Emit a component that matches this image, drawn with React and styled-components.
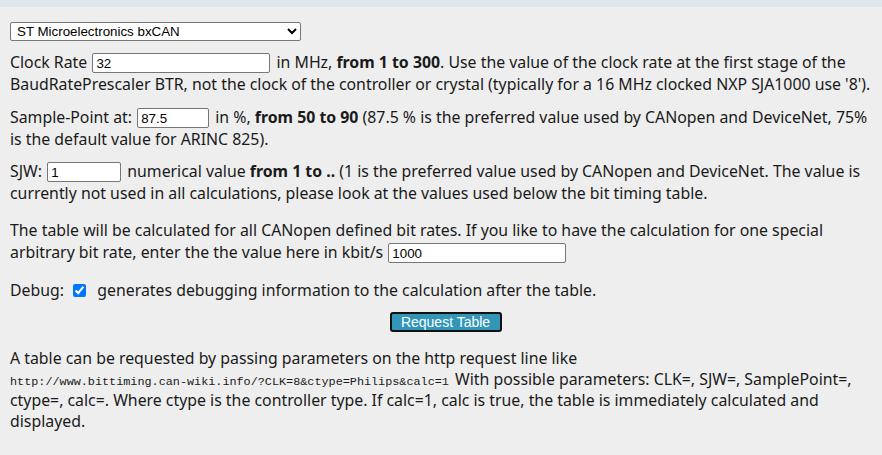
import React from 'react'
import styled, { createGlobalStyle } from 'styled-components'

const Global = createGlobalStyle`
    body {
        margin: 0;
        background: #eeeeee;
        font-family: "Noto Sans", "Open Sans", sans-serif;
        font-size: 15.85px;
        color: #1a1a1a;
    }
`

const TopStrip = styled.div`
    height: 7px;
    background: #dde7f0;
`

const Content = styled.div`
    padding: 15px 10px 0 10px;
    width: 864px;
`

const Select = styled.select`
    display: block;
    width: 291px;
    height: 19px;
    font-family: "Liberation Sans", Arial, sans-serif;
    font-size: 13.33px;
    color: #000;
    background: #fff;
    border: 1px solid #767676;
    border-radius: 2px;
    padding: 0 0 0 2px;
    margin: 0 0 10px 0;
`

const Para = styled.p`
    margin: 0 0 ${(p) => p.$gap || 11}px 0;
    line-height: ${(p) => p.$lh || 22}px;
`

const Field = styled.input`
    width: ${(p) => p.$w}px;
    height: 20px;
    box-sizing: border-box;
    font-family: "Liberation Sans", Arial, sans-serif;
    font-size: 13.33px;
    line-height: 16px;
    color: #000;
    background: #fff;
    border: 1px solid #767676;
    border-radius: 2px;
    padding: 1px 3px;
    margin: 2px 2px 0 1px;
    vertical-align: top;
`

const Check = styled.input`
    width: 13px;
    height: 13px;
    margin: 0 7px 0 5px;
    accent-color: #0075ff;
    vertical-align: -1px;
`

const ButtonRow = styled.div`
    display: flex;
    justify-content: center;
    padding-left: 7px;
    margin: 0 0 16px 0;
`

const Button = styled.button`
    width: 112px;
    height: 20px;
    background: #3196b8;
    color: #fff;
    font-family: "Liberation Sans", Arial, sans-serif;
    font-size: 14px;
    border: 2px solid #111;
    border-radius: 3px;
    padding: 0;
    line-height: 16px;
`

const Mono = styled.code`
    font-family: "Liberation Mono", "DejaVu Sans Mono", monospace;
    font-size: 11.8px;
    line-height: 1;
    white-space: nowrap;
    margin-right: 2px;
`

export default function App() {
    return (
        <>
            <Global />
            <TopStrip />
            <Content>
                <Select defaultValue="st">
                    <option value="st">ST Microelectronics bxCAN</option>
                </Select>
                <Para>
                    Clock Rate <Field $w={178} defaultValue="32" /> in MHz, <b>from 1 to 300</b>. Use the value of the clock rate at the first stage of the BaudRatePrescaler BTR, not the clock of the controller or crystal (typically for a 16 MHz clocked NXP SJA1000 use '8').
                </Para>
                <Para $gap={10}>
                    Sample-Point at: <Field $w={72} defaultValue="87.5" /> in %, <b>from 50 to 90</b> (87.5 % is the preferred value used by CANopen and DeviceNet, 75% is the default value for ARINC 825).
                </Para>
                <Para $gap={15}>
                    SJW: <Field $w={74} defaultValue="1" /> numerical value <b>from 1 to ..</b> (1 is the preferred value used by CANopen and DeviceNet. The value is currently not used in all calculations, please look at the values used below the bit timing table.
                </Para>
                <Para $gap={16}>
                    The table will be calculated for all CANopen defined bit rates. If you like to have the calculation for one special arbitrary bit rate, enter the the value here in kbit/s <Field $w={178} defaultValue="1000" />
                </Para>
                <Para $gap={11}>
                    Debug: <Check type="checkbox" defaultChecked /> generates debugging information to the calculation after the table.
                </Para>
                <ButtonRow>
                    <Button type="button">Request Table</Button>
                </ButtonRow>
                <Para $lh={21}>
                    A table can be requested by passing parameters on the http request line like <Mono>http://www.bittiming.can-wiki.info/?CLK=8&amp;ctype=Philips&amp;calc=1</Mono> With possible parameters: CLK=, SJW=, SamplePoint=, ctype=, calc=. Where ctype is the controller type. If calc=1, calc is true, the table is immediately calculated and displayed.
                </Para>
            </Content>
        </>
    )
}
